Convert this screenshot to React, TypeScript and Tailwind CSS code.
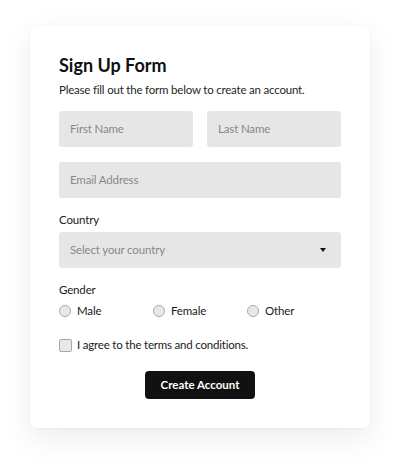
import React from "react";

function Radio({ label }: { label: string }) {
  return (
    <label className="flex items-center gap-[6px] h-[16px]">
      <span className="w-[12px] h-[12px] rounded-full border border-[#a8a8a8] bg-[#e8e8e8] box-border shrink-0" />
      <span className="text-[11.5px] tracking-[-0.15px] leading-[16px] text-[#1a1a1a]">{label}</span>
    </label>
  );
}

export default function App() {
  return (
    <div
      className="w-[400px] h-[462px] bg-white pt-[26px]"
      style={{ fontFamily: 'Lato, "Noto Sans", sans-serif' }}
    >
      <div className="mx-auto w-[340px] bg-white rounded-[7px] shadow-[0_0_0_1px_rgba(0,0,0,0.02),0_10px_30px_rgba(0,0,0,0.08)] px-[29px] pt-[27px] pb-[29px] flex flex-col">
        <h1 className="text-[18px] leading-[24px] font-bold text-[#111111]">Sign Up Form</h1>
        <p className="mt-[5px] text-[11.5px] tracking-[-0.2px] leading-[16px] text-[#1f1f1f]">
          Please fill out the form below to create an account.
        </p>
        <div className="mt-[13px] flex gap-[14px]">
          <div className="flex-1 h-[36px] rounded-[3px] bg-[#e6e6e6] flex items-center px-[11px] text-[11.5px] tracking-[-0.15px] text-[#888888]">
            First Name
          </div>
          <div className="flex-1 h-[36px] rounded-[3px] bg-[#e6e6e6] flex items-center px-[11px] text-[11.5px] tracking-[-0.15px] text-[#888888]">
            Last Name
          </div>
        </div>
        <div className="mt-[15px] h-[36px] rounded-[3px] bg-[#e6e6e6] flex items-center px-[11px] text-[11.5px] tracking-[-0.15px] text-[#888888]">
          Email Address
        </div>
        <div className="mt-[14px] text-[11.5px] tracking-[-0.15px] leading-[16px] text-[#1a1a1a]">Country</div>
        <div className="mt-[4px] h-[36px] rounded-[3px] bg-[#e6e6e6] flex items-center justify-between pl-[11px] pr-[15px] text-[11.5px] tracking-[-0.15px] text-[#888888]">
          <span>Select your country</span>
          <svg width="6" height="4" viewBox="0 0 6 4">
            <polygon points="0,0 6,0 3,4" fill="#111" />
          </svg>
        </div>
        <div className="mt-[14px] text-[11.5px] tracking-[-0.15px] leading-[16px] text-[#1a1a1a]">Gender</div>
        <div className="mt-[5px] grid grid-cols-3">
          <Radio label="Male" />
          <Radio label="Female" />
          <Radio label="Other" />
        </div>
        <label className="mt-[18px] flex items-center gap-[5px] h-[16px]">
          <span className="w-[13px] h-[13px] rounded-[2px] border border-[#a8a8a8] bg-[#e8e8e8] box-border shrink-0" />
          <span className="text-[11.5px] tracking-[-0.2px] leading-[16px] text-[#1a1a1a]">I agree to the terms and conditions.</span>
        </label>
        <div className="mt-[18px] flex justify-center">
          <button className="w-[110px] h-[28px] rounded-[4px] bg-[#111111] text-white text-[11.5px] font-bold">
            Create Account
          </button>
        </div>
      </div>
    </div>
  );
}
